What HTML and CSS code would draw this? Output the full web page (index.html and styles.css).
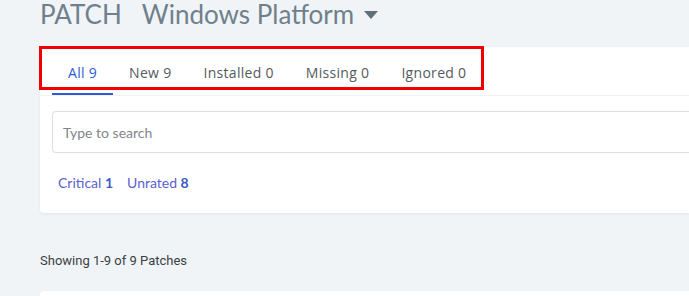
FILE: index.html
```html
<!DOCTYPE html>
<html lang="en">
<head>
<meta charset="UTF-8">
<title>Patch - Windows Platform</title>
<link rel="stylesheet" href="styles.css">
</head>
<body>

<!-- HEADER -->
<div class="title">
  <span class="module">PATCH</span>
  <span class="platform">Windows Platform</span>
  <svg class="caret" width="14" height="9" viewBox="0 0 14 9"><path d="M0 0h14L7 8z" fill="#5f707c"/></svg>
</div>

<!-- FILTER CARD -->
<div class="card">
  <div class="tabs">
    <div class="tab active">All 9</div>
    <div class="tab">New 9</div>
    <div class="tab">Installed 0</div>
    <div class="tab">Missing 0</div>
    <div class="tab">Ignored 0</div>
  </div>
  <div class="body">
    <input class="search" placeholder="Type to search">
    <div class="ratings">
      <a>Critical <b>1</b></a>
      <a>Unrated <b>8</b></a>
    </div>
  </div>
  <div class="highlight"></div>
</div>

<p class="count">Showing 1-9 of 9 Patches</p>

<div class="card list"></div>

</body>
</html>
```

FILE: styles.css
```css
body{
 margin:0;
 padding:0 0 0 40px;
 background:#f0f4f7;
 font-family:'Lato','Open Sans',sans-serif;
 overflow:hidden;
 height:296px;
}

/* HEADER */
.title{
 display:flex;
 align-items:center;
 height:27px;
 line-height:26px;
 color:#6f808c;
 font-size:26px;
}
.module{margin-right:20px;}
.caret{margin-left:10px;margin-top:3px;}

/* CARD */
.card{
 position:relative;
 background:#fff;
 border-radius:4px 0 0 4px;
 box-shadow:0 1px 3px rgba(0,0,0,0.06);
 margin-top:20px;
}

.tabs{
 display:flex;
 padding:0 12px;
 height:48px;
 border-bottom:1px solid #eef2f5;
}
.tab{
 padding:6px 16px 0;
 font-family:'Open Sans',sans-serif;
 font-size:14px;
 letter-spacing:0.3px;
 line-height:40px;
 color:#545a60;
 border-bottom:2px solid transparent;
}
.tab.active{
 color:#2d5bd2;
 border-bottom-color:#2d5bd2;
}

.body{padding:15px 0 22px 12px;}

.search{
 display:block;
 box-sizing:border-box;
 width:100%;
 height:42px;
 padding:0 10px;
 border:1px solid #dcdfe2;
 border-right:none;
 border-radius:4px 0 0 4px;
 font:14px 'Lato','Open Sans',sans-serif;
}
.search::placeholder{color:#80868b;}

.ratings{
 display:flex;
 gap:14px;
 margin-top:21px;
 padding-left:6px;
 font-size:14px;
 color:#5a5fd0;
}
.ratings b{color:#3c5bc8;}

/* annotation box */
.highlight{
 position:absolute;
 left:-1px;
 top:-1px;
 width:439px;
 height:38px;
 border:3px solid #f20000;
}

.count{
 margin:40px 0 0;
 font:13px 'Roboto',sans-serif;
 color:#3a3f44;
}

.list{margin-top:23px;height:40px;}
```
